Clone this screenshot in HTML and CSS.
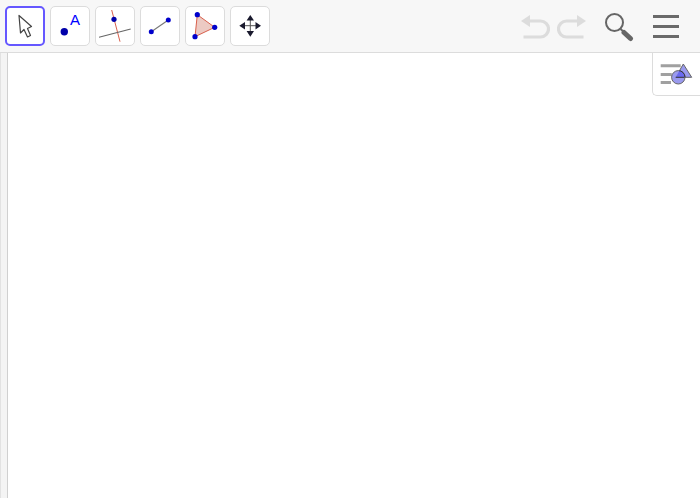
FILE: index.html
```html
<!DOCTYPE html>
<html lang="en">
<head>
    <meta charset="UTF-8">
    <title>GeoGebra</title>
    <link rel="stylesheet" href="styles.css">
</head>
<body>
    <div class="applet">
        <div class="toolbar">
            <div class="tools">
                <button class="tool-btn selected">
                    <svg width="40" height="40" viewBox="0 0 40 40"><path d="M14 9.500 L15.500 27 L19 23.500 L22.500 31 L25.500 29.500 L22.500 22.500 L26.500 20.500 Z" fill="#fff" stroke="#444" stroke-width="1.200" stroke-linejoin="round"/></svg>
                </button>
                <button class="tool-btn">
                    <svg width="40" height="40" viewBox="0 0 40 40"><circle cx="14.300" cy="25.700" r="3.700" fill="#00a"/><text x="20" y="19" class="point-label">A</text></svg>
                </button>
                <button class="tool-btn">
                    <svg width="40" height="40" viewBox="0 0 40 40"><path d="M16.700 4 L25 35.700" stroke="#d9604c" stroke-width="1"/><path d="M4 31.300 L35.700 23" stroke="#666" stroke-width="1.100"/><circle cx="19" cy="13.300" r="2.600" fill="#00a"/></svg>
                </button>
                <button class="tool-btn">
                    <svg width="40" height="40" viewBox="0 0 40 40"><path d="M11.300 25.700 L28.300 14" stroke="#777" stroke-width="1.100"/><circle cx="11.300" cy="25.700" r="2.500" fill="#00c"/><circle cx="28.300" cy="14" r="2.500" fill="#00c"/></svg>
                </button>
                <button class="tool-btn">
                    <svg width="40" height="40" viewBox="0 0 40 40"><path d="M12.300 8.700 L29.700 21.300 L10 30.700 Z" fill="#eccac3" stroke="#d9604c" stroke-width="1"/><circle cx="12.300" cy="8.700" r="2.600" fill="#00c"/><circle cx="29.700" cy="21.300" r="2.600" fill="#00c"/><circle cx="10" cy="30.700" r="2.600" fill="#00c"/></svg>
                </button>
                <button class="tool-btn">
                    <svg width="40" height="40" viewBox="0 0 40 40"><path d="M20.300 12 L20.300 28 M12 19.700 L28 19.700" stroke="#555" stroke-width="1"/><path d="M20.300 9 L24 14.500 L16.600 14.500 Z M20.300 30.700 L24 25 L16.600 25 Z M9.300 19.700 L15 16 L15 23.400 Z M31 19.700 L25.500 16 L25.500 23.400 Z" fill="#1a1a2e"/></svg>
                </button>
            </div>
            <div class="actions">
                <svg class="undo" width="30" height="28" viewBox="0 0 30 28"><path d="M9 9 H20.500 A8 8 0 0 1 20.500 25 H3.500" fill="none" stroke="#dcdcdc" stroke-width="3.200"/><path d="M1 9 L10 3 V15 Z" fill="#dcdcdc"/></svg>
                <svg class="redo" width="30" height="28" viewBox="0 0 30 28"><path d="M21 9 H9.500 A8 8 0 0 0 9.500 25 H26.500" fill="none" stroke="#dcdcdc" stroke-width="3.200"/><path d="M29 9 L20 3 V15 Z" fill="#dcdcdc"/></svg>
                <svg class="search" width="30" height="30" viewBox="0 0 30 30"><circle cx="10.500" cy="10.500" r="8.500" fill="none" stroke="#666" stroke-width="2"/><path d="M16.500 17 L20 20" stroke="#666" stroke-width="2"/><path d="M20 20.500 L26.500 26.500" stroke="#666" stroke-width="5" stroke-linecap="round"/></svg>
                <div class="menu-icon"><span></span><span></span><span></span></div>
            </div>
        </div>
        <div class="main">
            <div class="side-strip"></div>
            <div class="graphics">
                <button class="style-toggle">
                    <svg width="35" height="30" viewBox="0 0 35 30">
                        <defs><clipPath id="tri-clip"><path d="M24.300 5 L32.700 18.300 H16.700 Z"/></clipPath></defs>
                        <path d="M1.700 6.800 H21.700 M1.700 15.400 H12.700 M1.700 23.500 H12" stroke="#a0a0a0" stroke-width="3"/>
                        <path d="M24.300 5 L32.700 18.300 H16.700 Z" fill="#9a9aee" stroke="#666" stroke-width="1"/>
                        <circle cx="19.300" cy="18.300" r="6.700" fill="#9a9aee" stroke="#666" stroke-width="1"/>
                        <circle cx="19.300" cy="18.300" r="6.700" fill="#6a6af0" stroke="#333" stroke-width="1" clip-path="url(#tri-clip)"/>
                        <path d="M16.700 18.300 H25.500" stroke="#333" stroke-width="1"/>
                    </svg>
                </button>
            </div>
        </div>
    </div>
</body>
</html>
```

FILE: styles.css
```css
body {
    margin: 0;
    background-color: white;
    font-family: "Liberation Sans", sans-serif;
    overflow: hidden;
}
.applet {
    width: 700px;
    height: 498px;
    display: flex;
    flex-direction: column;
}
.toolbar {
    height: 46px;
    flex-shrink: 0;
    background-color: #f7f7f7;
    border-bottom: 1px solid #dcdcdc;
    display: flex;
    justify-content: space-between;
    padding: 6px 0 0 5px;
}
.tools {
    display: flex;
    gap: 5px;
    align-items: flex-start;
}
.tool-btn {
    width: 40px;
    height: 40px;
    padding: 0;
    background-color: white;
    border: 1px solid #dcdcdc;
    border-radius: 5px;
    display: flex;
    align-items: center;
    justify-content: center;
}
.tool-btn svg {
    flex: none;
}
.tool-btn.selected {
    border: 2px solid #6557ff;
}
.point-label {
    font-size: 15px;
    fill: #00f;
    font-family: "Liberation Sans", sans-serif;
}
.actions {
    display: flex;
    align-items: flex-start;
    padding-right: 21px;
}
.undo {
    margin: 6px 7px 0 0;
}
.redo {
    margin: 6px 17px 0 0;
}
.search {
    margin: 6px 19px 0 0;
}
.menu-icon {
    width: 26px;
    margin-top: 9px;
    display: flex;
    flex-direction: column;
    gap: 7px;
}
.menu-icon span {
    height: 3px;
    background-color: #6a6a6a;
}
.main {
    flex: 1;
    display: flex;
}
.side-strip {
    width: 6px;
    background-color: #f4f4f4;
    border-left: 1px solid #e2e2e2;
    border-right: 1px solid #d0d0d0;
}
.graphics {
    flex: 1;
    display: flex;
    justify-content: flex-end;
    align-items: flex-start;
}
.style-toggle {
    width: 48px;
    height: 43px;
    padding: 0;
    background-color: white;
    border: 1px solid #dcdcdc;
    border-top: none;
    border-right: none;
    border-bottom-left-radius: 5px;
    display: flex;
    align-items: center;
    justify-content: center;
}
```
